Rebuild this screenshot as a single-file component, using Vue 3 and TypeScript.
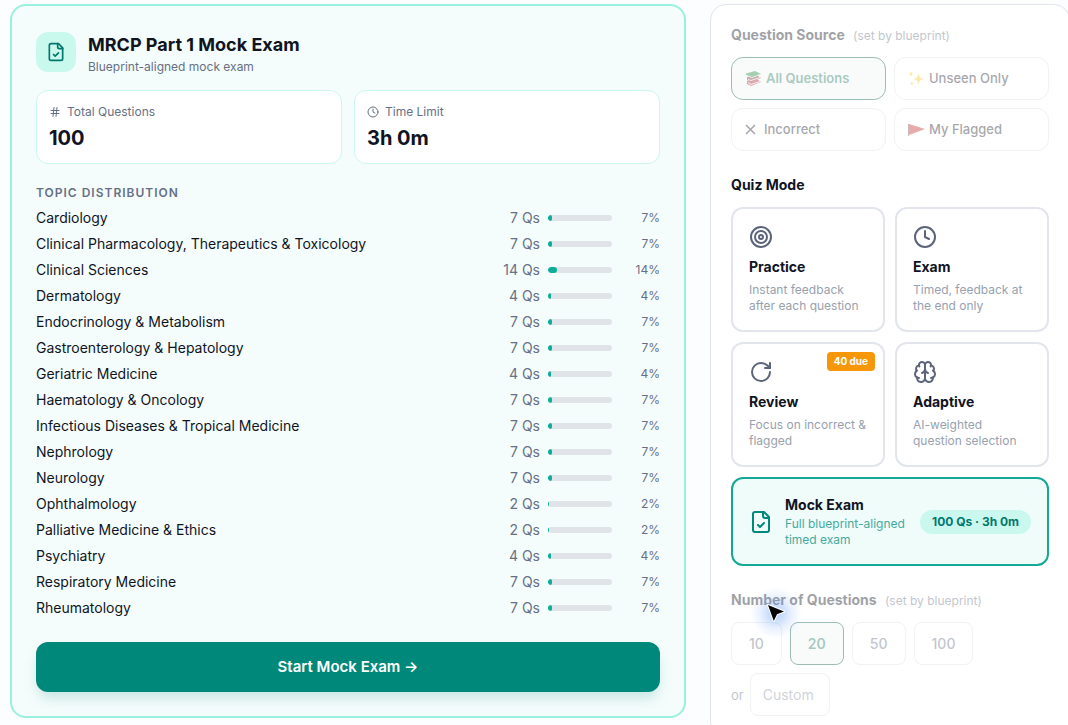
<script setup lang="ts">
import { ref } from 'vue'

interface Topic {
  name: string
  count: number
  pct: number
}

const topics: Topic[] = [
  { name: 'Cardiology', count: 7, pct: 7 },
  { name: 'Clinical Pharmacology, Therapeutics & Toxicology', count: 7, pct: 7 },
  { name: 'Clinical Sciences', count: 14, pct: 14 },
  { name: 'Dermatology', count: 4, pct: 4 },
  { name: 'Endocrinology & Metabolism', count: 7, pct: 7 },
  { name: 'Gastroenterology & Hepatology', count: 7, pct: 7 },
  { name: 'Geriatric Medicine', count: 4, pct: 4 },
  { name: 'Haematology & Oncology', count: 7, pct: 7 },
  { name: 'Infectious Diseases & Tropical Medicine', count: 7, pct: 7 },
  { name: 'Nephrology', count: 7, pct: 7 },
  { name: 'Neurology', count: 7, pct: 7 },
  { name: 'Ophthalmology', count: 2, pct: 2 },
  { name: 'Palliative Medicine & Ethics', count: 2, pct: 2 },
  { name: 'Psychiatry', count: 4, pct: 4 },
  { name: 'Respiratory Medicine', count: 7, pct: 7 },
  { name: 'Rheumatology', count: 7, pct: 7 },
]

const modes = [
  { id: 'practice', title: 'Practice', desc: 'Instant feedback after each question', badge: '' },
  { id: 'exam', title: 'Exam', desc: 'Timed, feedback at the end only', badge: '' },
  { id: 'review', title: 'Review', desc: 'Focus on incorrect & flagged', badge: '40 due' },
  { id: 'adaptive', title: 'Adaptive', desc: 'AI-weighted question selection', badge: '' },
]

const mode = ref('mock')
const counts = [10, 20, 50, 100]
const custom = ref('')
</script>

<template>
  <main class="page">
    <section class="exam-card">
      <header class="exam-head">
        <span class="exam-icon">
          <svg class="icon" width="20" height="20" viewBox="0 0 24 24" aria-hidden="true">
            <path d="M15 2H6a2 2 0 0 0-2 2v16a2 2 0 0 0 2 2h12a2 2 0 0 0 2-2V7z" />
            <path d="M14 2v4a2 2 0 0 0 2 2h4" />
            <path d="m9 15 2 2 4-4" />
          </svg>
        </span>
        <div class="exam-name">
          <h1>MRCP Part 1 Mock Exam</h1>
          <p class="sub">Blueprint-aligned mock exam</p>
        </div>
      </header>

      <div class="stats">
        <div class="stat">
          <div class="stat-label">
            <svg class="icon" width="12" height="12" viewBox="0 0 24 24" aria-hidden="true">
              <path d="M4 9h16M4 15h16M10 3 8 21M16 3l-2 18" />
            </svg>
            Total Questions
          </div>
          <div class="stat-value">100</div>
        </div>
        <div class="stat">
          <div class="stat-label">
            <svg class="icon" width="12" height="12" viewBox="0 0 24 24" aria-hidden="true">
              <circle cx="12" cy="12" r="10" />
              <path d="M12 6v6l4 2" />
            </svg>
            Time Limit
          </div>
          <div class="stat-value">3h 0m</div>
        </div>
      </div>

      <h2 id="topics-title" class="topics-title">Topic Distribution</h2>
      <table class="topics" aria-labelledby="topics-title">
        <tbody>
          <tr v-for="t in topics" :key="t.name">
            <th scope="row">{{ t.name }}</th>
            <td class="count">{{ t.count }} Qs</td>
            <td class="bar-cell">
              <div class="track"><div class="fill" :style="{ width: t.pct + '%' }"></div></div>
            </td>
            <td class="pct">{{ t.pct }}%</td>
          </tr>
        </tbody>
      </table>

      <button type="button" class="start">Start Mock Exam →</button>
    </section>

    <aside class="panel">
      <section class="locked">
        <h2 class="title">Question Source <small>(set by blueprint)</small></h2>
        <div class="sources">
          <button type="button" class="source active" disabled>
            <svg width="17" height="17" viewBox="0 0 17 17" aria-hidden="true">
              <path fill="#b02a35" d="m2 11 10-2 4 3-10 4-4-2z" />
              <path fill="#e9e4e4" d="m3 12 3 2 9-3v1l-9 3-3-2z" />
              <path fill="#8e3338" d="M2 7 12 5l4 3-10 4-4-2z" />
              <path fill="#ddd" d="m3 9 3 1 9-3v1l-9 3-3-1z" />
              <path fill="#248a42" d="M1 3.500 10 1l6 3-9 4-6-3z" />
              <path fill="#c5dccb" d="m2 5 5 2 8-3v1L7 8 2 6z" />
            </svg>
            All Questions
          </button>
          <button type="button" class="source" disabled>
            <svg width="17" height="17" viewBox="0 0 17 17" fill="#f8c832" aria-hidden="true">
              <path d="M10.500 3c.5 4 1.500 5 5.500 6-4 .8-5 2-5.500 6-.6-4-1.500-5.200-5.500-6 4-.9 5-2 5.500-6z" />
              <path d="M3 1c.3 2 .7 2.600 2.500 3-1.800.4-2.200 1-2.500 3C2.700 5 2.300 4.400.500 4 2.300 3.600 2.700 3 3 1zM4 11c.3 1.600.7 2.200 2.200 2.500-1.500.3-1.900.900-2.200 2.500-.3-1.600-.7-2.200-2.200-2.500C3.300 13.200 3.700 12.600 4 11z" />
            </svg>
            Unseen Only
          </button>
          <button type="button" class="source" disabled>
            <svg class="cross" width="11" height="17" viewBox="0 0 11 17" aria-hidden="true">
              <path d="m1 4 9 9M10 4l-9 9" />
            </svg>
            Incorrect
          </button>
          <button type="button" class="source" disabled>
            <svg width="17" height="17" viewBox="0 0 17 17" aria-hidden="true">
              <path fill="#7d5555" d="M0 3h1v12H0z" />
              <path fill="#c2302c" d="m1 3 16 5-16 6z" />
            </svg>
            My Flagged
          </button>
        </div>
      </section>

      <section>
        <h2 class="title">Quiz Mode</h2>
        <div class="modes">
          <button
            v-for="m in modes"
            :key="m.id"
            type="button"
            class="mode"
            :aria-pressed="mode === m.id"
            @click="mode = m.id"
          >
            <svg class="icon" width="24" height="24" viewBox="0 0 24 24" aria-hidden="true">
              <template v-if="m.id === 'practice'">
                <circle cx="12" cy="12" r="10" />
                <circle cx="12" cy="12" r="6" />
                <circle cx="12" cy="12" r="2" />
              </template>
              <template v-else-if="m.id === 'exam'">
                <circle cx="12" cy="12" r="10" />
                <path d="M12 6v6l4 2" />
              </template>
              <template v-else-if="m.id === 'review'">
                <path d="M21 12a9 9 0 1 1-9-9c2.520 0 4.930 1 6.740 2.740L21 8" />
                <path d="M21 3v5h-5" />
              </template>
              <template v-else>
                <path d="M12 5a3 3 0 1 0-5.997.125 4 4 0 0 0-2.526 5.770 4 4 0 0 0 .556 6.588A4 4 0 1 0 12 18Z" />
                <path d="M12 5a3 3 0 1 1 5.997.125 4 4 0 0 1 2.526 5.770 4 4 0 0 1-.556 6.588A4 4 0 1 1 12 18Z" />
                <path d="M15 13a4.500 4.500 0 0 1-3-4 4.500 4.500 0 0 1-3 4" />
                <path d="M17.599 6.500a3 3 0 0 0 .399-1.375M6.003 5.125A3 3 0 0 0 6.401 6.500" />
                <path d="M3.477 10.896a4 4 0 0 1 .585-.396M19.938 10.500a4 4 0 0 1 .585.396" />
                <path d="M6 18a4 4 0 0 1-1.967-.516M19.967 17.484A4 4 0 0 1 18 18" />
              </template>
            </svg>
            <span class="mode-title">{{ m.title }}</span>
            <span class="mode-desc">{{ m.desc }}</span>
            <span v-if="m.badge" class="badge">{{ m.badge }}</span>
          </button>
          <button type="button" class="mode mock" :aria-pressed="mode === 'mock'" @click="mode = 'mock'">
            <svg class="icon" width="24" height="24" viewBox="0 0 24 24" aria-hidden="true">
              <path d="M15 2H6a2 2 0 0 0-2 2v16a2 2 0 0 0 2 2h12a2 2 0 0 0 2-2V7z" />
              <path d="M14 2v4a2 2 0 0 0 2 2h4" />
              <path d="m9 15 2 2 4-4" />
            </svg>
            <span class="mock-text">
              <span class="mode-title">Mock Exam</span>
              <span class="mode-desc">Full blueprint-aligned timed exam</span>
            </span>
            <span class="pill">100 Qs · 3h 0m</span>
          </button>
        </div>
      </section>

      <section class="number">
        <div class="locked">
          <h2 class="title">Number of Questions <small>(set by blueprint)</small></h2>
          <div class="counts">
            <button v-for="c in counts" :key="c" type="button" class="num" :class="{ active: c === 20 }" disabled>
              {{ c }}
            </button>
            <label class="custom">or <input v-model="custom" type="text" placeholder="Custom" disabled /></label>
          </div>
        </div>
        <span class="pointer">
          <svg width="20" height="20" viewBox="0 0 20 20" aria-hidden="true">
            <path d="M2 2 18 8.500l-7 2.800L7.800 18z" />
          </svg>
        </span>
      </section>
    </aside>
  </main>
</template>

<style>
body {
  background: #fcfdff;
  overflow: hidden;
}
</style>

<style scoped>
.page {
  display: grid;
  grid-template-columns: minmax(0, 1fr) 360px;
  align-items: start;
  gap: 24px;
  padding: 4px 0 0 10px;
  margin-right: -2px;
  font-family: Inter, "Liberation Sans", sans-serif;
  font-size: 14px;
  line-height: 20px;
  color: #10141f;
}
.page * {
  box-sizing: border-box;
}
h1,
h2,
p {
  margin: 0;
}
button,
input {
  font: inherit;
  color: inherit;
}
.icon {
  flex: none;
  fill: none;
  stroke: currentColor;
  stroke-width: 2;
  stroke-linecap: round;
  stroke-linejoin: round;
}
.exam-card {
  border: 2px solid #99f0dc;
  border-radius: 16px;
  background: #f5fdfc;
  padding: 24px;
}
.exam-head {
  display: flex;
  align-items: center;
  gap: 12px;
  height: 44px;
}
.exam-name {
  padding-top: 2px;
}
.exam-icon {
  display: flex;
  align-items: center;
  justify-content: center;
  width: 40px;
  height: 40px;
  border-radius: 12px;
  background: #c9f8ed;
  color: #00786f;
}
h1 {
  font-size: 18px;
  line-height: 28px;
  font-weight: 700;
}
.sub {
  font-size: 12px;
  line-height: 16px;
  color: #667085;
}
.stats {
  display: grid;
  grid-template-columns: 1fr 1fr;
  gap: 12px;
  margin-top: 16px;
}
.stat {
  border: 1px solid #cbf7ee;
  border-radius: 12px;
  background: #fff;
  padding: 13px 12px 11px;
}
.stat-label {
  display: flex;
  align-items: center;
  gap: 6px;
  margin-bottom: 4px;
  font-size: 12px;
  line-height: 16px;
  color: #667085;
}
.stat-value {
  font-size: 20px;
  line-height: 28px;
  font-weight: 700;
}
.topics-title {
  margin-top: 21px;
  font-size: 12px;
  line-height: 16px;
  font-weight: 600;
  letter-spacing: 1px;
  text-transform: uppercase;
  color: #667085;
}
.topics {
  width: 100%;
  margin-top: 4px;
  border-collapse: collapse;
}
.topics th,
.topics td {
  height: 26px;
  padding: 0;
}
.topics th {
  font-weight: 400;
  text-align: left;
}
.topics .count {
  text-align: right;
  color: #667085;
}
.topics .bar-cell {
  width: 80px;
  padding: 0 8px;
}
.track {
  height: 6px;
  border-radius: 3px;
  background: #e0e3e8;
  overflow: hidden;
}
.fill {
  height: 100%;
  border-radius: 3px;
  background: #0bae99;
}
.topics .pct {
  width: 40px;
  font-size: 12px;
  text-align: right;
  color: #667085;
}
.start {
  display: block;
  width: 100%;
  margin-top: 21px;
  padding: 13px 24px;
  border: 0;
  border-radius: 12px;
  background: #00897b;
  color: #fff;
  font-size: 15px;
  line-height: 24px;
  font-weight: 600;
  box-shadow: 0 8px 14px -2px rgba(0, 137, 123, 0.2);
}
.panel {
  display: flex;
  flex-direction: column;
  gap: 24px;
  padding: 20px;
  border: 1px solid #e0e5ec;
  border-radius: 16px;
  background: #fff;
}
.title {
  margin-bottom: 12px;
  font-size: 14px;
  line-height: 20px;
  font-weight: 700;
}
.title small {
  margin-left: 5px;
  font-size: 12px;
  line-height: 16px;
  font-weight: 400;
  color: #667085;
}
.locked {
  opacity: 0.4;
}
.sources {
  display: grid;
  grid-template-columns: 1fr 1fr;
  gap: 8px;
}
.source {
  display: flex;
  align-items: center;
  gap: 4px;
  padding: 11px 13px;
  border: 1px solid #dcdfe4;
  border-radius: 12px;
  background: #fff;
  color: #1e2430;
  font-size: 13px;
  line-height: 19px;
  font-weight: 500;
}
.cross {
  fill: none;
  stroke: #1e2430;
  stroke-width: 1.500;
  margin-right: 4px;
}
.source.active,
.num.active {
  border-color: #0b5c47;
  background: #eef6f4;
  color: #2b7a65;
  font-weight: 600;
}
.modes {
  display: grid;
  grid-template-columns: 1fr 1fr;
  gap: 10px;
}
.mode {
  position: relative;
  display: flex;
  flex-direction: column;
  align-items: flex-start;
  padding: 16px;
  border: 2px solid #e2e5ec;
  border-radius: 12px;
  background: #fff;
  text-align: left;
}
.mode > .icon {
  color: #5b647a;
}
.mode-title {
  display: block;
  margin-bottom: 1px;
  font-size: 14px;
  line-height: 20px;
  font-weight: 700;
}
.mode > .mode-title {
  margin: 8px 0 5px;
}
.mode-desc {
  display: block;
  font-size: 12px;
  line-height: 16px;
  color: #98a1ae;
}
.badge {
  position: absolute;
  top: 8px;
  right: 8px;
  padding: 2px 7px;
  border-radius: 4px;
  background: #f59709;
  color: #fff;
  font-size: 10px;
  line-height: 15px;
  font-weight: 700;
}
.mode.mock {
  grid-column: 1 / -1;
  flex-direction: row;
  align-items: center;
  gap: 12px;
  border-color: #14a896;
  background: #f0fcfa;
}
.mock > .icon {
  color: #00897b;
}
.mock-text {
  flex: 1;
}
.mock .mode-desc {
  color: #45aa9f;
}
.pill {
  flex: none;
  padding: 4px 12px;
  border-radius: 12px;
  background: #cbf8ee;
  color: #00786f;
  font-size: 12px;
  line-height: 16px;
  font-weight: 700;
}
.number {
  position: relative;
}
.counts {
  display: flex;
  flex-wrap: wrap;
  align-items: center;
  gap: 8px;
}
.num {
  padding: 11px 17px;
  border: 1px solid #dcdfe4;
  border-radius: 8px;
  background: #fff;
  color: #667085;
  font-size: 14px;
  line-height: 19px;
  font-weight: 500;
}
.custom {
  display: flex;
  align-items: center;
  gap: 6px;
  width: 100%;
  color: #667085;
  font-size: 13px;
}
.custom input {
  width: 80px;
  height: 43px;
  padding: 0 12px;
  border: 1px solid #dcdfe4;
  border-radius: 8px;
  background: #fff;
  font-size: 14px;
}
.custom input::placeholder {
  color: #8b93a3;
  opacity: 1;
}
.pointer {
  position: absolute;
  top: 13px;
  left: 35px;
  width: 20px;
  height: 20px;
}
.pointer::before {
  content: "";
  position: absolute;
  inset: -16px;
  border-radius: 50%;
  background: radial-gradient(circle, rgba(59, 130, 246, 0.4), rgba(59, 130, 246, 0.1) 45%, rgba(59, 130, 246, 0) 70%);
}
.pointer svg {
  position: relative;
  display: block;
  overflow: visible;
  fill: #050505;
  stroke: #fff;
  stroke-width: 2;
  stroke-linejoin: round;
  paint-order: stroke;
}
</style>
